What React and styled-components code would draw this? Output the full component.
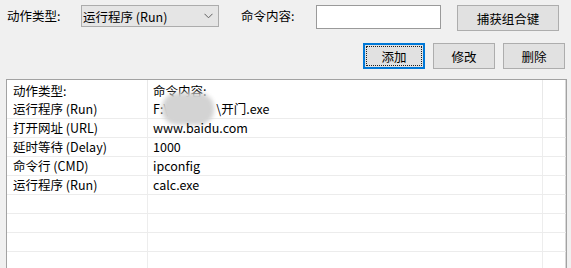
import React from "react";
import styled, { createGlobalStyle } from "styled-components";

const Global = createGlobalStyle`
  html, body { margin: 0; padding: 0; background: #f0f0f0; }
  body {
    font-family: "Microsoft YaHei UI", "Noto Sans CJK SC", "Noto Sans", sans-serif;
    font-size: 12.5px;
    color: #000;
  }
`;

const Window = styled.div`
  width: 571px;
  height: 268px;
  overflow: hidden;
  background: #f0f0f0;
  display: flex;
  flex-direction: column;
`;

const TopRow = styled.div`
  display: flex;
  align-items: flex-start;
  padding: 5px 0 0 7px;
  height: 26px;
`;

const Label = styled.span`
  width: ${(p) => p.$w}px;
  margin-left: ${(p) => p.$ml || 0}px;
  line-height: 22px;
  white-space: nowrap;
`;

const Combo = styled.div`
  box-sizing: border-box;
  width: 138px;
  height: 22px;
  background: #e5e5e5;
  border: 1px solid #acacac;
  display: flex;
  align-items: center;
  padding-left: 1px;
  padding-right: 5px;
  justify-content: space-between;
  white-space: nowrap;
`;

const TextInput = styled.div`
  box-sizing: border-box;
  width: 125px;
  height: 24px;
  background: #fff;
  border: 1px solid #9a9a9a;
`;

const Button = styled.div`
  position: relative;
  box-sizing: border-box;
  width: ${(p) => p.$w}px;
  height: 26px;
  margin-left: ${(p) => p.$ml || 0}px;
  background: #e1e1e1;
  border: ${(p) => (p.$focus ? "2px solid #0078d7" : "1px solid #adadad")};
  display: flex;
  align-items: center;
  justify-content: center;
  white-space: nowrap;
  ${(p) =>
    p.$focus &&
    `&::after {
      content: "";
      position: absolute;
      inset: 1px;
      border: 1px dotted #222;
    }`}
`;

const ActionRow = styled.div`
  display: flex;
  justify-content: flex-end;
  gap: 8px;
  padding-right: 6px;
  margin-top: 12px;
`;

const List = styled.div`
  box-sizing: border-box;
  margin: 10px 4px 0 6px;
  flex: 1;
  background: #fff;
  border: 1px solid #a2a2a2;
  border-bottom: none;
  box-shadow: inset -1px 0 0 #d8d8d8;
  overflow: hidden;
`;

const Row = styled.div`
  display: grid;
  grid-template-columns: 141px 395px 1fr;
  height: ${(p) => (p.$header ? 20 : 19)}px;
  box-sizing: border-box;
  border-bottom: ${(p) => (p.$header ? "none" : "1px solid #ececec")};
`;

const Cell = styled.div`
  position: relative;
  box-sizing: border-box;
  padding-left: ${(p) => p.$pl}px;
  border-right: 1px solid ${(p) => (p.$header ? "#e8e8e8" : "#ededed")};
  line-height: ${(p) => (p.$header ? 22 : 18)}px;
  white-space: nowrap;
  overflow: visible;
`;

const LastCell = styled.div``;

const Hidden = styled.span`
  display: inline-block;
  width: 48px;
`;

const Blur = styled.span`
  position: absolute;
  left: 14px;
  top: -7px;
  width: 52px;
  height: 32px;
  border-radius: 15px;
  background: #d3d3d3;
  filter: blur(2px);
`;

const Chevron = () => (
  <svg width="9" height="6" viewBox="0 0 9 6">
    <path d="M0.5 0.8 L4.5 4.8 L8.5 0.8" fill="none" stroke="#606060" strokeWidth="1" />
  </svg>
);

const rows = [
  ["运行程序 (Run)", "", true],
  ["打开网址 (URL)", "www.baidu.com"],
  ["延时等待 (Delay)", "1000"],
  ["命令行 (CMD)", "ipconfig"],
  ["运行程序 (Run)", "calc.exe"],
  ["", ""],
  ["", ""],
  ["", ""],
  ["", ""],
];

export default function App() {
  return (
    <>
      <Global />
      <Window>
        <TopRow>
          <Label $w={74}>动作类型:</Label>
          <Combo>
            <span>运行程序 (Run)</span>
            <Chevron />
          </Combo>
          <Label $w={75} $ml={22}>命令内容:</Label>
          <TextInput />
          <Button $w={102} $ml={16}>捕获组合键</Button>
        </TopRow>
        <ActionRow>
          <Button $w={62} $focus>添加</Button>
          <Button $w={62}>修改</Button>
          <Button $w={62}>删除</Button>
        </ActionRow>
        <List>
          <Row $header>
            <Cell $header $pl={6}>动作类型:</Cell>
            <Cell $header $pl={5}>命令内容:</Cell>
            <LastCell />
          </Row>
          {rows.map(([a, b, blur], i) => (
            <Row key={i}>
              <Cell $pl={6}>{a}</Cell>
              <Cell $pl={5}>
                {blur ? (
                  <>
                    F:\<Hidden />\开门.exe
                    <Blur />
                  </>
                ) : (
                  b
                )}
              </Cell>
              <LastCell />
            </Row>
          ))}
        </List>
      </Window>
    </>
  );
}
